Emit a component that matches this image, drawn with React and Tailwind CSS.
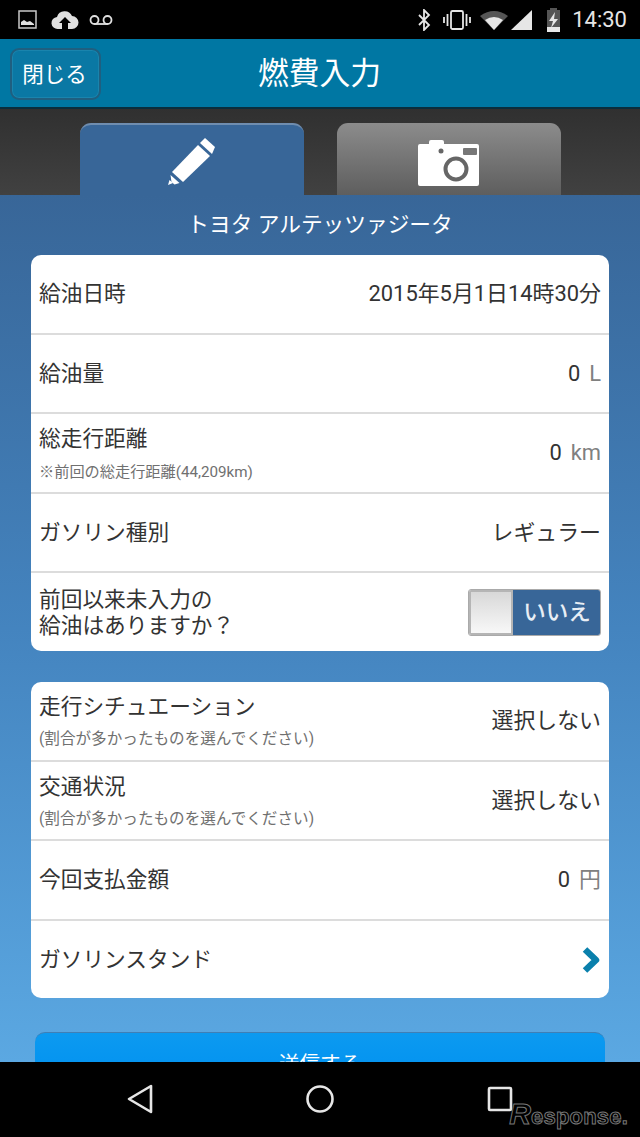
const font = { fontFamily: '"Roboto","Noto Sans CJK JP",sans-serif' };

function Row({ label, sub, subSize = "small", value, unit, children, last }) {
  return (
    <div className={`flex items-center justify-between pl-[8px] pr-2 pt-[1px] ${last ? "min-h-0 flex-1" : "h-[79.5px] shrink-0 border-b-2 border-[#dcdcdc]"}`}>
      <div className="flex flex-col">
        <div className="text-[21.7px] leading-[26px] text-[#333333]">{label}</div>
        {sub && <div className={`leading-[18px] text-[#707070] ${subSize === "small" ? "mt-[11px] text-[15.2px]" : "mt-[10px] text-[15.6px]"}`}>{sub}</div>}
      </div>
      {children}
      {value && (
        <div className="text-[21.9px] leading-[26px] text-[#333333]">
          {value}
          {unit && <span className="ml-[9px] text-[#808080]">{unit}</span>}
        </div>
      )}
    </div>
  );
}

export default function App() {
  return (
    <div style={font} className="flex h-[1137px] w-[640px] flex-col overflow-hidden bg-black">
      {/* status bar */}
      <div className="flex h-[39px] shrink-0 items-center bg-black pl-[18px] pr-[13px]">
        <svg width="20" height="20" viewBox="0 0 20 20" className="mr-[13px]">
          <rect x="1" y="1" width="17" height="17" fill="none" stroke="#c8c8c8" strokeWidth="1.5" />
          <path d="M3 15v-3l3-2 3 2 3-1 4 3v1z" fill="#e0e0e0" />
        </svg>
        <svg width="28" height="22" viewBox="0 0 28 22" className="mr-[10px]">
          <path d="M7 20a6 6 0 0 1-1-12A8 8 0 0 1 21 7a6.5 6.5 0 0 1 0 13h-4v-6h3l-6-6-6 6h3v6z" fill="#e0e0e0" />
        </svg>
        <svg width="24" height="12" viewBox="0 0 24 12">
          <circle cx="5.5" cy="6" r="4" fill="none" stroke="#e0e0e0" strokeWidth="1.8" />
          <circle cx="18.5" cy="6" r="4" fill="none" stroke="#e0e0e0" strokeWidth="1.8" />
          <path d="M5.5 10h13" stroke="#e0e0e0" strokeWidth="1.8" />
        </svg>
        <div className="flex-1" />
        <svg width="14" height="22" viewBox="0 0 14 22" className="mr-[12px]">
          <path d="M2 6l10 10-5 5V1l5 5L2 16" fill="none" stroke="#e6e6e6" strokeWidth="1.8" />
        </svg>
        <svg width="28" height="22" viewBox="0 0 28 22" className="mr-[9px]">
          <rect x="8" y="2" width="12" height="18" rx="1.5" fill="none" stroke="#e6e6e6" strokeWidth="1.8" />
          <path d="M1 8v6M4.500 5v12M23.500 5v12M27 8v6" stroke="#e6e6e6" strokeWidth="1.8" />
        </svg>
        <svg width="28" height="22" viewBox="0 0 28 22" className="mr-[3px]">
          <path d="M0 7Q14-3 28 7L14 21z" fill="#555555" />
          <path d="M5 11Q14 5 23 11L14 21z" fill="#e6e6e6" />
        </svg>
        <svg width="22" height="22" viewBox="0 0 22 22" className="mr-[13px]">
          <path d="M21 1v20H0z" fill="#e6e6e6" />
        </svg>
        <svg width="15" height="24" viewBox="0 0 15 24" className="mr-[11px]">
          <path d="M4 2V0h7v2h3v22H1V2z" fill="#555555" />
          <path d="M1 19h13v5H1z" fill="#e6e6e6" />
          <path d="M9 4L3 13h4l-2 7 7-9H8z" fill="#e6e6e6" />
        </svg>
        <span className="text-[22px] leading-none text-[#e6e6e6]">14:30</span>
      </div>

      {/* title bar */}
      <div className="relative flex h-[70px] shrink-0 items-center justify-center border-b-2 border-[#0a2e3e] bg-[#0077a3] pt-[3px]">
        <div className="absolute left-[10px] top-[9px] flex h-[52px] w-[91px] items-center justify-center rounded-[9px] border-2 border-[#1f5f80] bg-[#0a78a4] pr-[2px] pt-[3px] text-[21.5px] text-white shadow-[inset_0_0_0_1px_#1a84ad]">
          閉じる
        </div>
        <span className="pr-[1px] text-[30.8px] text-white">燃費入力</span>
      </div>

      {/* tabs */}
      <div className="flex h-[86px] shrink-0 items-end justify-center gap-[33px] bg-gradient-to-b from-[#303030] to-[#414141] pl-[1px]">
        <div className="flex h-[72px] w-[224px] items-center justify-center rounded-t-[11px] border-t-2 border-[#6f8daf] bg-[#386698]">
          <svg width="48" height="48" viewBox="0 0 48 48" className="mt-[3px]">
            <path d="M37 0l10 9-3 7-12-11z" fill="#fff" />
            <path d="M30 7l12 11-27 26L4 34z" fill="#fff" />
            <path d="M2.500 37l9 8-5 1.500-3-2.500z" fill="#fff" />
            <path d="M0 47l1.500-5 3.500 3z" fill="#fff" />
          </svg>
        </div>
        <div className="flex h-[72px] w-[224px] items-center justify-center rounded-t-[11px] bg-gradient-to-b from-[#8c8c8c] to-[#5e5e5e]">
          <svg width="64" height="48" viewBox="0 0 64 48" className="mt-[7px]">
            <path d="M3 5h9V3a2 2 0 0 1 2-2h11a2 2 0 0 1 2 2v2h33a2 2 0 0 1 2 2v38a2 2 0 0 1-2 2H3a2 2 0 0 1-2-2V7a2 2 0 0 1 2-2z" fill="#fff" />
            <circle cx="39" cy="30" r="10.500" fill="none" stroke="#666666" strokeWidth="4" />
            <circle cx="24" cy="12" r="2.500" fill="#666666" />
            <rect x="46" y="9" width="14" height="7" rx="1" fill="#777777" />
          </svg>
        </div>
      </div>

      {/* body */}
      <div className="relative min-h-0 flex-1 overflow-hidden bg-gradient-to-b from-[#386698] via-[#4484bf] to-[#5ba8e2] px-[31px]">
        <div className="flex h-[60px] items-center justify-center text-[21.7px] text-white">
          トヨタ アルテッツァジータ
        </div>
        <div className="flex h-[396px] flex-col overflow-hidden rounded-[10px] bg-white">
          <Row label="給油日時" value="2015年5月1日14時30分" />
          <Row label="給油量" value="0" unit="L" />
          <Row label="総走行距離" sub="※前回の総走行距離(44,209km)" value="0" unit="km" />
          <Row label="ガソリン種別" value="レギュラー" />
          <Row label={<>前回以来未入力の<br />給油はありますか？</>} last>
            <div className="flex h-[47px] w-[133px] overflow-hidden rounded-[3px] border border-[#aaaaaa]">
              <div className="w-[44px] border-2 border-[#b5b5b5] bg-gradient-to-b from-[#d8d8d8] to-[#f8f8f8]" />
              <div className="flex flex-1 items-center justify-center bg-[#386698] pl-[1px] text-[22.5px] font-medium text-[#e8eef5]">いいえ</div>
            </div>
          </Row>
        </div>
        <div className="mt-[31px] flex h-[316px] flex-col overflow-hidden rounded-[10px] bg-white">
          <Row label="走行シチュエーション" sub="(割合が多かったものを選んでください)" subSize="large" value="選択しない" />
          <Row label="交通状況" sub="(割合が多かったものを選んでください)" subSize="large" value="選択しない" />
          <Row label="今回支払金額" value="0" unit="円" />
          <Row label="ガソリンスタンド" last>
            <svg width="20" height="28" viewBox="0 0 20 28">
              <path d="M4 3.500L15 14 4 24.500" fill="none" stroke="#0a80ac" strokeWidth="6.500" strokeLinejoin="round" />
            </svg>
          </Row>
        </div>
        <div className="mx-[4px] mt-[34px] flex h-[60px] items-start justify-center rounded-t-[10px] border-t border-[#3f7fb5] bg-gradient-to-b from-[#0c9af0] to-[#008ff0] pt-[16px] text-[20.5px] text-white">
          送信する
        </div>
      </div>

      {/* nav bar */}
      <div className="relative flex h-[75px] shrink-0 items-center justify-center gap-[153px] bg-black pb-[2px]">
        <svg width="26" height="30" viewBox="0 0 26 30">
          <path d="M24 2v26L2 15z" fill="none" stroke="#e6e6e6" strokeWidth="2.6" strokeLinejoin="round" />
        </svg>
        <svg width="28" height="28" viewBox="0 0 28 28">
          <circle cx="14" cy="14" r="12.500" fill="none" stroke="#e6e6e6" strokeWidth="2.6" />
        </svg>
        <svg width="26" height="26" viewBox="0 0 26 26">
          <rect x="2" y="2" width="22" height="22" rx="1" fill="none" stroke="#e6e6e6" strokeWidth="2.6" />
        </svg>
        <span className="absolute bottom-[8px] right-[12px] font-['Liberation_Sans',sans-serif] text-[22px] font-bold leading-none tracking-[0.2px] text-black [-webkit-text-stroke:1px_#777777]">
          <span className="text-[30px] italic">R</span>esponse.
        </span>
      </div>
    </div>
  );
}
